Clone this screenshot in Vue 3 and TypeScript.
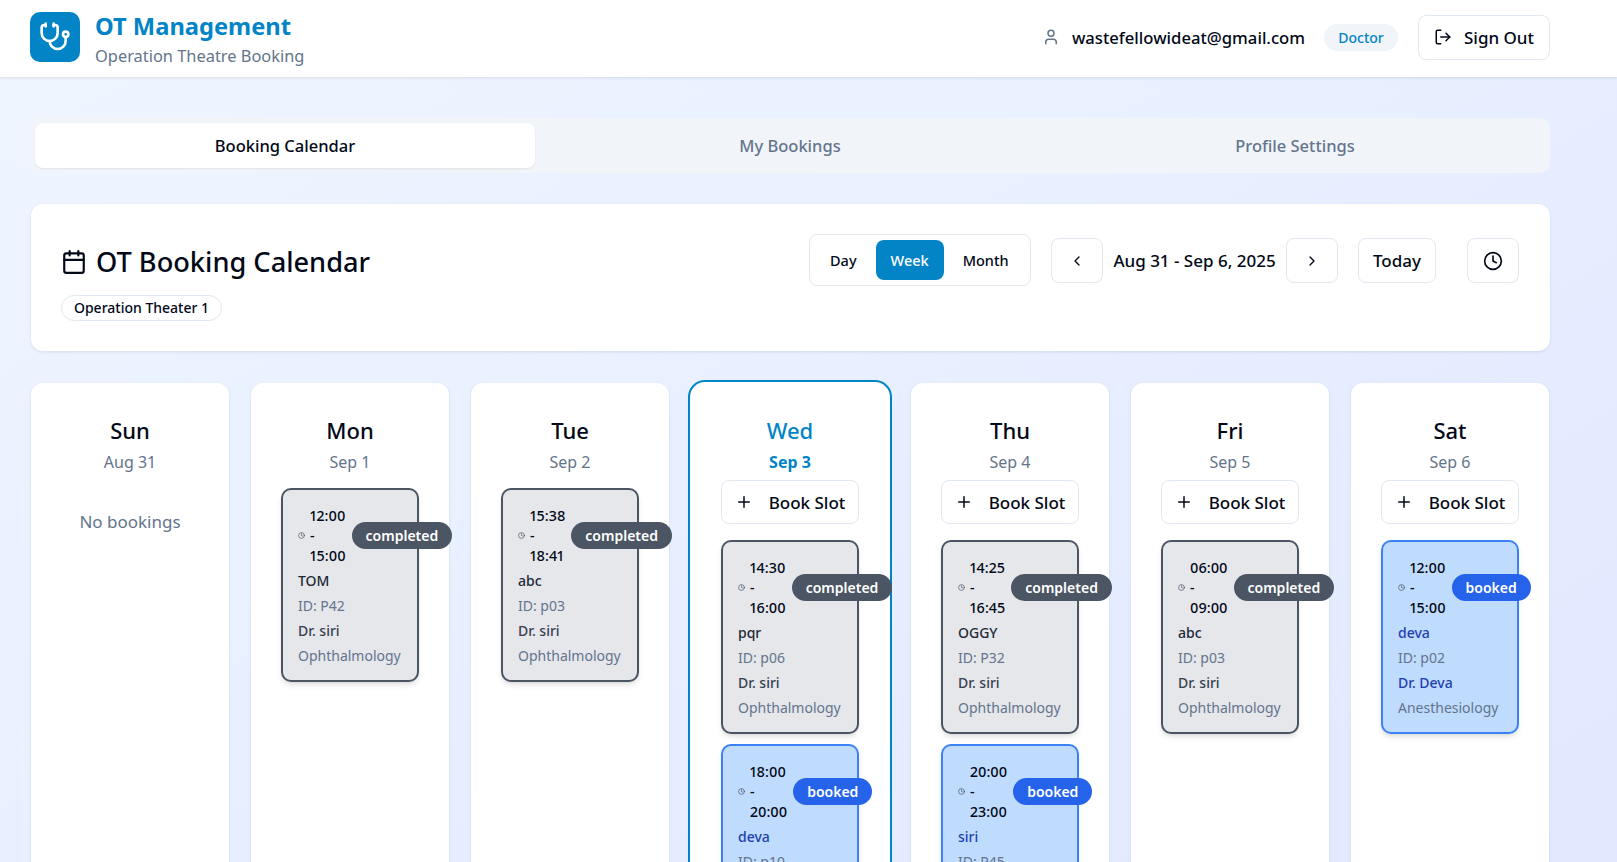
<script setup lang="ts">
interface Booking {
  start: string;
  end: string;
  patient: string;
  patientId: string;
  doctor: string;
  department: string;
  status: 'completed' | 'booked';
}

interface Day {
  name: string;
  date: string;
  current?: boolean;
  canBook: boolean;
  bookings: Booking[];
}

const siri = { doctor: 'Dr. siri', department: 'Ophthalmology' }
const deva = { doctor: 'Dr. Deva', department: 'Anesthesiology' }

const days: Day[] = [
  { name: 'Sun', date: 'Aug 31', canBook: false, bookings: [] },
  {
    name: 'Mon', date: 'Sep 1', canBook: false,
    bookings: [{ start: '12:00', end: '15:00', patient: 'TOM', patientId: 'P42', status: 'completed', ...siri }],
  },
  {
    name: 'Tue', date: 'Sep 2', canBook: false,
    bookings: [{ start: '15:38', end: '18:41', patient: 'abc', patientId: 'p03', status: 'completed', ...siri }],
  },
  {
    name: 'Wed', date: 'Sep 3', current: true, canBook: true,
    bookings: [
      { start: '14:30', end: '16:00', patient: 'pqr', patientId: 'p06', status: 'completed', ...siri },
      { start: '18:00', end: '20:00', patient: 'deva', patientId: 'p10', status: 'booked', ...deva },
    ],
  },
  {
    name: 'Thu', date: 'Sep 4', canBook: true,
    bookings: [
      { start: '14:25', end: '16:45', patient: 'OGGY', patientId: 'P32', status: 'completed', ...siri },
      { start: '20:00', end: '23:00', patient: 'siri', patientId: 'P45', status: 'booked', ...deva },
    ],
  },
  {
    name: 'Fri', date: 'Sep 5', canBook: true,
    bookings: [{ start: '06:00', end: '09:00', patient: 'abc', patientId: 'p03', status: 'completed', ...siri }],
  },
  {
    name: 'Sat', date: 'Sep 6', canBook: true,
    bookings: [{ start: '12:00', end: '15:00', patient: 'deva', patientId: 'p02', status: 'booked', ...deva }],
  },
]

const tabs = ['Booking Calendar', 'My Bookings', 'Profile Settings']
const views = ['Day', 'Week', 'Month']
</script>

<template>
  <div class="page">
    <header class="topbar">
      <div class="brand">
        <div class="logo">
          <svg class="icon" width="32" height="32" viewBox="0 0 24 24">
            <path d="M11 2v2" /><path d="M5 2v2" />
            <path d="M5 3H4a2 2 0 0 0-2 2v4a6 6 0 0 0 12 0V5a2 2 0 0 0-2-2h-1" />
            <path d="M8 15a6 6 0 0 0 12 0v-3" />
            <circle cx="20" cy="10" r="2" />
          </svg>
        </div>
        <div class="brand-text">
          <h1 class="brand-title">OT Management</h1>
          <p class="brand-sub">Operation Theatre Booking</p>
        </div>
      </div>
      <div class="account">
        <svg class="icon user-icon" width="18" height="18" viewBox="0 0 24 24">
          <path d="M19 21v-2a4 4 0 0 0-4-4H9a4 4 0 0 0-4 4v2" />
          <circle cx="12" cy="7" r="4" />
        </svg>
        <span class="email">wastefellowideat@gmail.com</span>
        <span class="role">Doctor</span>
        <button class="btn signout">
          <svg class="icon" width="18" height="18" viewBox="0 0 24 24">
            <path d="m16 17 5-5-5-5" /><path d="M21 12H9" />
            <path d="M9 21H5a2 2 0 0 1-2-2V5a2 2 0 0 1 2-2h4" />
          </svg>
          Sign Out
        </button>
      </div>
    </header>

    <main class="content">
      <nav class="tabs">
        <div v-for="(tab, i) in tabs" :key="tab" class="tab" :class="{ active: i === 0 }">{{ tab }}</div>
      </nav>

      <section class="toolbar">
        <div class="toolbar-title">
          <h2 class="cal-title">
            <svg class="icon" width="26" height="26" viewBox="0 0 24 24">
              <path d="M8 2v4" /><path d="M16 2v4" />
              <rect width="18" height="18" x="3" y="4" rx="2" />
              <path d="M3 10h18" />
            </svg>
            OT Booking Calendar
          </h2>
          <span class="theater">Operation Theater 1</span>
        </div>
        <div class="controls">
          <div class="views">
            <button v-for="v in views" :key="v" class="view" :class="{ active: v === 'Week' }">{{ v }}</button>
          </div>
          <div class="range">
            <button class="btn square">
              <svg class="icon" width="16" height="16" viewBox="0 0 24 24"><path d="m15 18-6-6 6-6" /></svg>
            </button>
            <span class="range-label">Aug 31 - Sep 6, 2025</span>
            <button class="btn square">
              <svg class="icon" width="16" height="16" viewBox="0 0 24 24"><path d="m9 18 6-6-6-6" /></svg>
            </button>
          </div>
          <button class="btn today-btn">Today</button>
          <button class="btn square clock-btn">
            <svg class="icon" width="20" height="20" viewBox="0 0 24 24">
              <circle cx="12" cy="12" r="10" />
              <polyline points="12 6 12 12 16 14" />
            </svg>
          </button>
        </div>
      </section>

      <section class="week">
        <article v-for="day in days" :key="day.name" class="day" :class="{ current: day.current }">
          <div class="day-head">
            <div class="day-name">{{ day.name }}</div>
            <div class="day-date">{{ day.date }}</div>
          </div>
          <button v-if="day.canBook" class="btn book">
            <svg class="icon" width="18" height="18" viewBox="0 0 24 24">
              <path d="M5 12h14" /><path d="M12 5v14" />
            </svg>
            Book Slot
          </button>
          <p v-if="!day.bookings.length" class="empty">No bookings</p>
          <div v-else class="list" :class="{ bare: !day.canBook }">
            <div v-for="b in day.bookings" :key="b.start" class="event" :class="b.status">
              <div class="event-top">
                <div class="time">
                  <svg class="icon mini" width="7" height="7" viewBox="0 0 24 24">
                    <circle cx="12" cy="12" r="10" />
                    <polyline points="12 6 12 12 16 14" />
                  </svg>
                  <span>{{ b.start }} - {{ b.end }}</span>
                </div>
                <span class="badge">{{ b.status }}</span>
              </div>
              <div class="patient">{{ b.patient }}</div>
              <div class="muted">ID: {{ b.patientId }}</div>
              <div class="doctor">{{ b.doctor }}</div>
              <div class="muted">{{ b.department }}</div>
            </div>
          </div>
        </article>
      </section>
    </main>
  </div>
</template>

<style>
html, body {
  margin: 0;
  overflow: hidden;
}
</style>

<style scoped>
.page {
  min-height: 100vh;
  padding-bottom: 32px;
  background: linear-gradient(to bottom right, #eff6ff, #e0e7ff);
  font-family: "Noto Sans", "Open Sans", sans-serif;
  color: #020817;
}

button {
  font-family: inherit;
  color: inherit;
}

.icon {
  fill: none;
  stroke: currentColor;
  stroke-width: 2;
  stroke-linecap: round;
  stroke-linejoin: round;
  flex: none;
}

.topbar {
  height: 77px;
  box-sizing: border-box;
  display: flex;
  align-items: center;
  justify-content: space-between;
  padding: 0 67px 3px 30px;
  background: #fff;
  box-shadow: 0 1px 3px rgba(15, 23, 42, 0.1);
}

.brand {
  display: flex;
  align-items: center;
  gap: 15px;
}

.logo {
  width: 50px;
  height: 50px;
  border-radius: 10px;
  background: #0284c7;
  color: #fff;
  display: flex;
  align-items: center;
  justify-content: center;
}

.brand-text {
  padding-top: 5px;
}

.brand-title {
  margin: 0;
  font-size: 23.7px;
  line-height: 30px;
  font-weight: 700;
  color: #0284c7;
}

.brand-sub {
  margin: 2px 0 0;
  font-size: 16.4px;
  line-height: 26px;
  color: #64748b;
}

.account {
  display: flex;
  align-items: center;
}

.user-icon {
  color: #64748b;
  margin-right: 12px;
}

.email {
  font-size: 16.65px;
  font-weight: 500;
  margin-right: 19px;
}

.role {
  height: 27px;
  width: 74px;
  border-radius: 14px;
  background: #f1f5f9;
  color: #0284c7;
  font-size: 14px;
  font-weight: 500;
  line-height: 27px;
  text-align: center;
  margin-right: 20px;
}

.btn {
  display: inline-flex;
  align-items: center;
  justify-content: center;
  background: #fff;
  border: 1px solid #e2e8f0;
  border-radius: 8px;
  padding: 0;
  box-sizing: border-box;
}

.signout {
  width: 132px;
  height: 45px;
  gap: 12px;
  font-size: 17px;
  font-weight: 500;
}

.content {
  width: 1520px;
  margin-left: 30px;
}

.tabs {
  margin-top: 41px;
  display: grid;
  grid-template-columns: repeat(3, 1fr);
  gap: 5px;
  padding: 5px;
  background: #f1f5f9;
  border-radius: 10px;
}

.tab {
  height: 45px;
  line-height: 45px;
  text-align: center;
  border-radius: 8px;
  font-size: 16.5px;
  font-weight: 500;
  color: #64748b;
}

.tab.active {
  background: #fff;
  color: #020817;
  box-shadow: 0 1px 2px rgba(15, 23, 42, 0.08);
}

.toolbar {
  margin-top: 31px;
  margin-left: 1px;
  height: 147px;
  box-sizing: border-box;
  padding: 30px 31px 30px 30px;
  display: flex;
  justify-content: space-between;
  background: #fff;
  border-radius: 12px;
  box-shadow: 0 1px 3px rgba(15, 23, 42, 0.1);
}

.toolbar-title {
  padding-top: 4px;
}

.cal-title {
  margin: 0 0 9px;
  display: flex;
  align-items: center;
  gap: 9px;
  font-size: 27.2px;
  line-height: 48px;
  font-weight: 500;
}

.theater {
  display: inline-block;
  box-sizing: border-box;
  height: 26px;
  width: 161px;
  line-height: 24px;
  text-align: center;
  border: 1px solid #e2e8f0;
  border-radius: 13px;
  font-size: 14px;
  font-weight: 500;
}

.controls {
  display: flex;
  align-items: flex-start;
}

.views {
  box-sizing: border-box;
  width: 222px;
  height: 52px;
  display: flex;
  align-items: center;
  gap: 4px;
  padding: 0 5px;
  border: 1px solid #e2e8f0;
  border-radius: 8px;
}

.view {
  height: 40px;
  padding: 0 15px;
  border: 0;
  background: none;
  border-radius: 8px;
  font-size: 14.5px;
  font-weight: 500;
}

.view.active {
  background: #0284c7;
  color: #fff;
}

.range {
  display: flex;
  align-items: center;
  margin: 4px 0 0 20px;
}

.square {
  width: 52px;
  height: 45px;
}

.range-label {
  width: 183px;
  text-align: center;
  font-size: 17px;
  font-weight: 500;
}

.today-btn {
  width: 78px;
  height: 45px;
  margin: 4px 0 0 20px;
  font-size: 17px;
  font-weight: 500;
}

.clock-btn {
  margin: 4px 0 0 31px;
}

.week {
  margin-top: 32px;
  margin-left: 1px;
  display: grid;
  grid-template-columns: repeat(7, 198px);
  gap: 22px;
}

.day {
  background: #fff;
  border-radius: 12px;
  padding: 32px 30px 30px;
  box-shadow: 0 1px 3px rgba(15, 23, 42, 0.1);
}

.day.current {
  box-shadow: 0 0 0 1px #fff, 0 0 0 3px #0284c7;
  border-radius: 14px;
}

.day-head {
  text-align: center;
  margin-bottom: 6px;
}

.day-name {
  font-size: 22px;
  line-height: 30px;
  font-weight: 500;
}

.day-date {
  margin-top: 5px;
  font-size: 16px;
  line-height: 24px;
  color: #64748b;
}

.current .day-name,
.current .day-date {
  color: #0284c7;
}

.current .day-date {
  font-weight: 700;
}

.book {
  width: 138px;
  height: 44px;
  gap: 16px;
  font-size: 17px;
  font-weight: 500;
  margin-bottom: 16px;
}

.list {
  display: flex;
  flex-direction: column;
  gap: 10px;
}

.list.bare {
  margin-top: 14px;
}

.empty {
  margin: 35px 0 0;
  text-align: center;
  font-size: 17px;
  line-height: 25px;
  color: #64748b;
}

.event {
  box-sizing: border-box;
  padding: 15.5px 15px 12px;
  border: 2px solid;
  border-radius: 10px;
  font-size: 14px;
  line-height: 25px;
  box-shadow: 0 4px 6px -1px rgba(0, 0, 0, 0.1), 0 2px 4px -2px rgba(0, 0, 0, 0.1);
}

.event.completed {
  background: #e5e7eb;
  border-color: #4b5563;
}

.event.booked {
  background: #bfdbfe;
  border-color: #3b82f6;
}

.event-top {
  display: flex;
  align-items: center;
  gap: 6px;
  margin-bottom: 2.5px;
}

.time {
  display: flex;
  align-items: center;
  gap: 5px;
  width: min-content;
  line-height: 20px;
  font-weight: 500;
  font-size: 14.3px;
  font-variant-numeric: proportional-nums;
}

.mini {
  color: #374151;
}

.badge {
  flex: none;
  height: 27px;
  line-height: 27px;
  padding: 0 14px;
  border-radius: 14px;
  color: #fff;
  font-weight: 600;
}

.completed .badge {
  background: #4b5563;
}

.booked .badge {
  background: #2563eb;
}

.patient {
  font-weight: 500;
}

.completed .patient {
  color: #1f2937;
}

.doctor {
  font-weight: 500;
}

.completed .doctor {
  color: #374151;
}

.booked .patient,
.booked .doctor {
  color: #1e40af;
}

.muted {
  color: #64748b;
}
</style>
